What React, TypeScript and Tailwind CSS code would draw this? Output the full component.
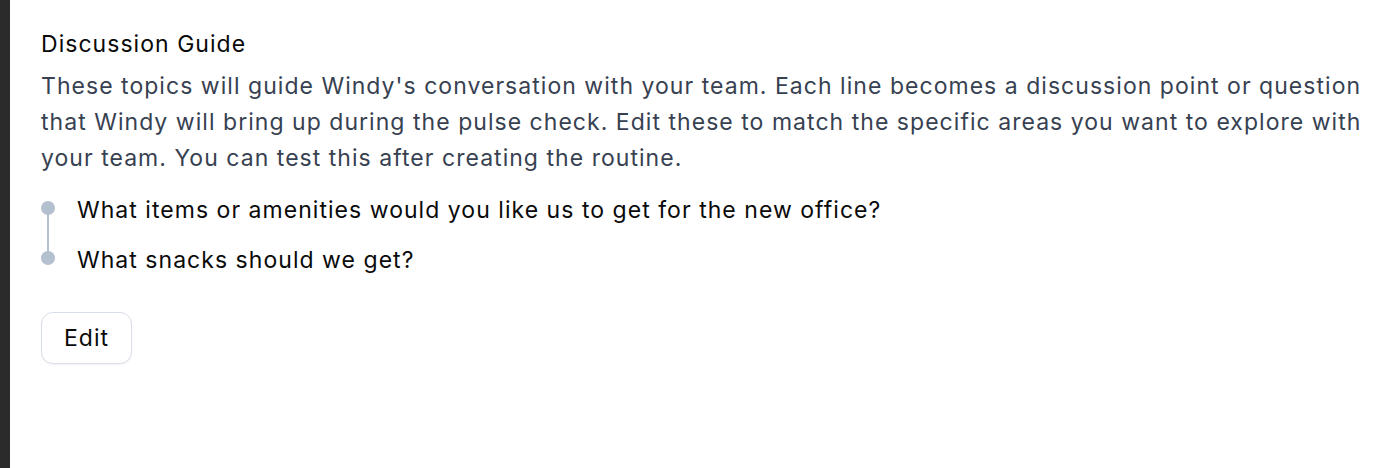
import React from 'react'

const topics = [
  'What items or amenities would you like us to get for the new office?',
  'What snacks should we get?',
]

export default function App() {
  return (
    <div className="flex h-[468px] w-full bg-white" style={{ fontFamily: 'Inter, "Noto Sans", sans-serif' }}>
      <div className="w-[10px] shrink-0 bg-[#2b2b2b]" />
      <div className="flex-1 pl-[31px] pr-[6px] pt-[28px] text-[23px] tracking-[0.045em]">
        <h2 className="leading-[32px] font-normal text-[#0a0a0a]">Discussion Guide</h2>
        <p className="mt-[8px] leading-[36px] text-[#374151]">
          These topics will guide Windy's conversation with your team. Each line becomes a discussion point or question that Windy will bring up during the pulse check. Edit these to match the specific areas you want to explore with your team. You can test this after creating the routine.
        </p>
        <div className="mt-[9px] flex flex-col">
          {topics.map((t, i) => (
            <div key={i} className="flex items-center gap-[22px] h-[50px]">
              <div className="relative w-[14px] flex justify-center self-stretch items-center">
                {i < topics.length - 1 && (
                  <div className="absolute left-[6px] top-[calc(50%-2px)] h-full w-[2px] bg-[#b4bfd0]" />
                )}
                <div className="relative -mt-[4px] h-[14px] w-[14px] rounded-full bg-[#b4bfd0]" />
              </div>
              <span className="text-[#0a0a0a]">{t}</span>
            </div>
          ))}
        </div>
        <button className="mt-[27px] h-[52px] w-[91px] rounded-[12px] border border-[#d9dfe8] bg-white text-[#0a0a0a] shadow-[0_1px_2px_rgba(15,23,42,0.05)]">
          Edit
        </button>
      </div>
    </div>
  )
}
